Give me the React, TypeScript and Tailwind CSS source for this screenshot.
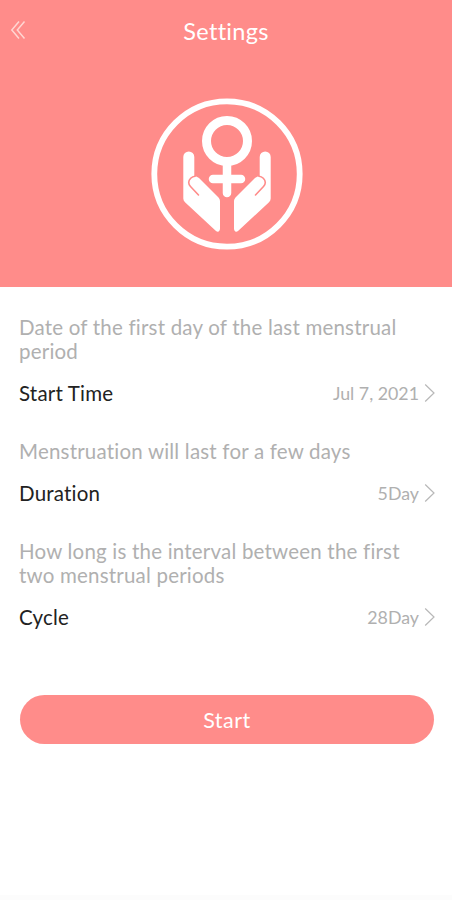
type Setting = {
  id: string;
  hint: string;
  label: string;
  value: string;
};

const settings: Setting[] = [
  {
    id: "start",
    hint: "Date of the first day of the last menstrual period",
    label: "Start Time",
    value: "Jul 7, 2021",
  },
  {
    id: "duration",
    hint: "Menstruation will last for a few days",
    label: "Duration",
    value: "5Day",
  },
  {
    id: "cycle",
    hint: "How long is the interval between the first two menstrual periods",
    label: "Cycle",
    value: "28Day",
  },
];

function BackIcon() {
  return (
    <svg width="16" height="20" viewBox="0 0 16 20" fill="none" stroke="#ffd6d2" strokeWidth="1.5">
      <path d="M9 1.5 1.8 10 9 18.5M14.5 1.5 7.3 10l7.2 8.5" />
    </svg>
  );
}

function ChevronIcon() {
  return (
    <svg width="12" height="20" viewBox="0 0 12 20" fill="none" stroke="#b8b8b8" strokeWidth="1.2">
      <path d="M1.2 1.5 10 10l-8.8 8.5" />
    </svg>
  );
}

function Hand() {
  return (
    <g>
      <path
        fill="#fff"
        d="M32.3 59a5.5 5.5 0 0 1 11 0v19.5c1.8-.3 3.2.2 4.7 1.6L67.5 99.5Q69 101 69 103v27.5c0 3.2-2.2 4-4.3 2.2L34 104.2Q32.3 102.6 32.3 100.5Z"
      />
      <path
        d="M44 78.2c-3.2.3-6.2 3.2-6.3 6.3 0 1.7.7 2.8 1.8 4l8 8.5"
        fill="none"
        stroke="#ff8c8a"
        strokeWidth="1.6"
        strokeLinecap="round"
      />
    </g>
  );
}

function Emblem() {
  return (
    <svg width="152" height="152" viewBox="0 0 152 152" fill="none">
      <circle cx="76" cy="76" r="72.7" stroke="#fff" strokeWidth="5.8" />
      <circle cx="76" cy="43" r="20.5" stroke="#fff" strokeWidth="9" />
      <path d="M76 66v29M62 81h28" stroke="#fff" strokeWidth="8.5" strokeLinecap="round" />
      <Hand />
      <g transform="matrix(-1 0 0 1 152 0)">
        <Hand />
      </g>
    </svg>
  );
}

export default function App() {
  return (
    <div className="flex min-h-[900px] w-full flex-col bg-white font-['Lato','Noto_Sans',sans-serif]">
      {/* Header */}
      <header className="h-[287px] bg-[#ff8c8a]">
        <div className="grid h-[60px] grid-cols-[40px_1fr_40px] items-center">
          <button className="pl-2.5" aria-label="Back">
            <BackIcon />
          </button>
          <h1 className="pt-px text-center text-[23.5px] leading-6 tracking-[0.3px] text-white">Settings</h1>
        </div>
        <div className="flex justify-center pt-[38px] pl-0.5">
          <Emblem />
        </div>
      </header>

      {/* Settings list */}
      <main className="flex-1 pt-7 pr-4 pl-[19px]">
        {settings.map((item) => (
          <section key={item.id} className="mb-[27px]">
            <p className="w-[400px] text-[20.5px] leading-6 tracking-[0.2px] text-[#b0b0b0]">{item.hint}</p>
            <button className="mt-[11px] flex h-[38px] w-full items-center justify-between">
              <span className="text-[20.5px] leading-6 tracking-[0.2px] text-[#222]">{item.label}</span>
              <span className="flex items-center gap-[5px]">
                <span className="text-[17.8px] leading-6 text-[#b0b0b0]">{item.value}</span>
                <ChevronIcon />
              </span>
            </button>
          </section>
        ))}
        <button className="mt-8 ml-px h-[49px] w-[414px] rounded-full bg-[#ff8c8a] pt-0.5 text-[21.5px] tracking-[0.5px] text-white">
          Start
        </button>
      </main>

      <div className="h-[5px] bg-[#fcfcfc]" />
    </div>
  );
}
